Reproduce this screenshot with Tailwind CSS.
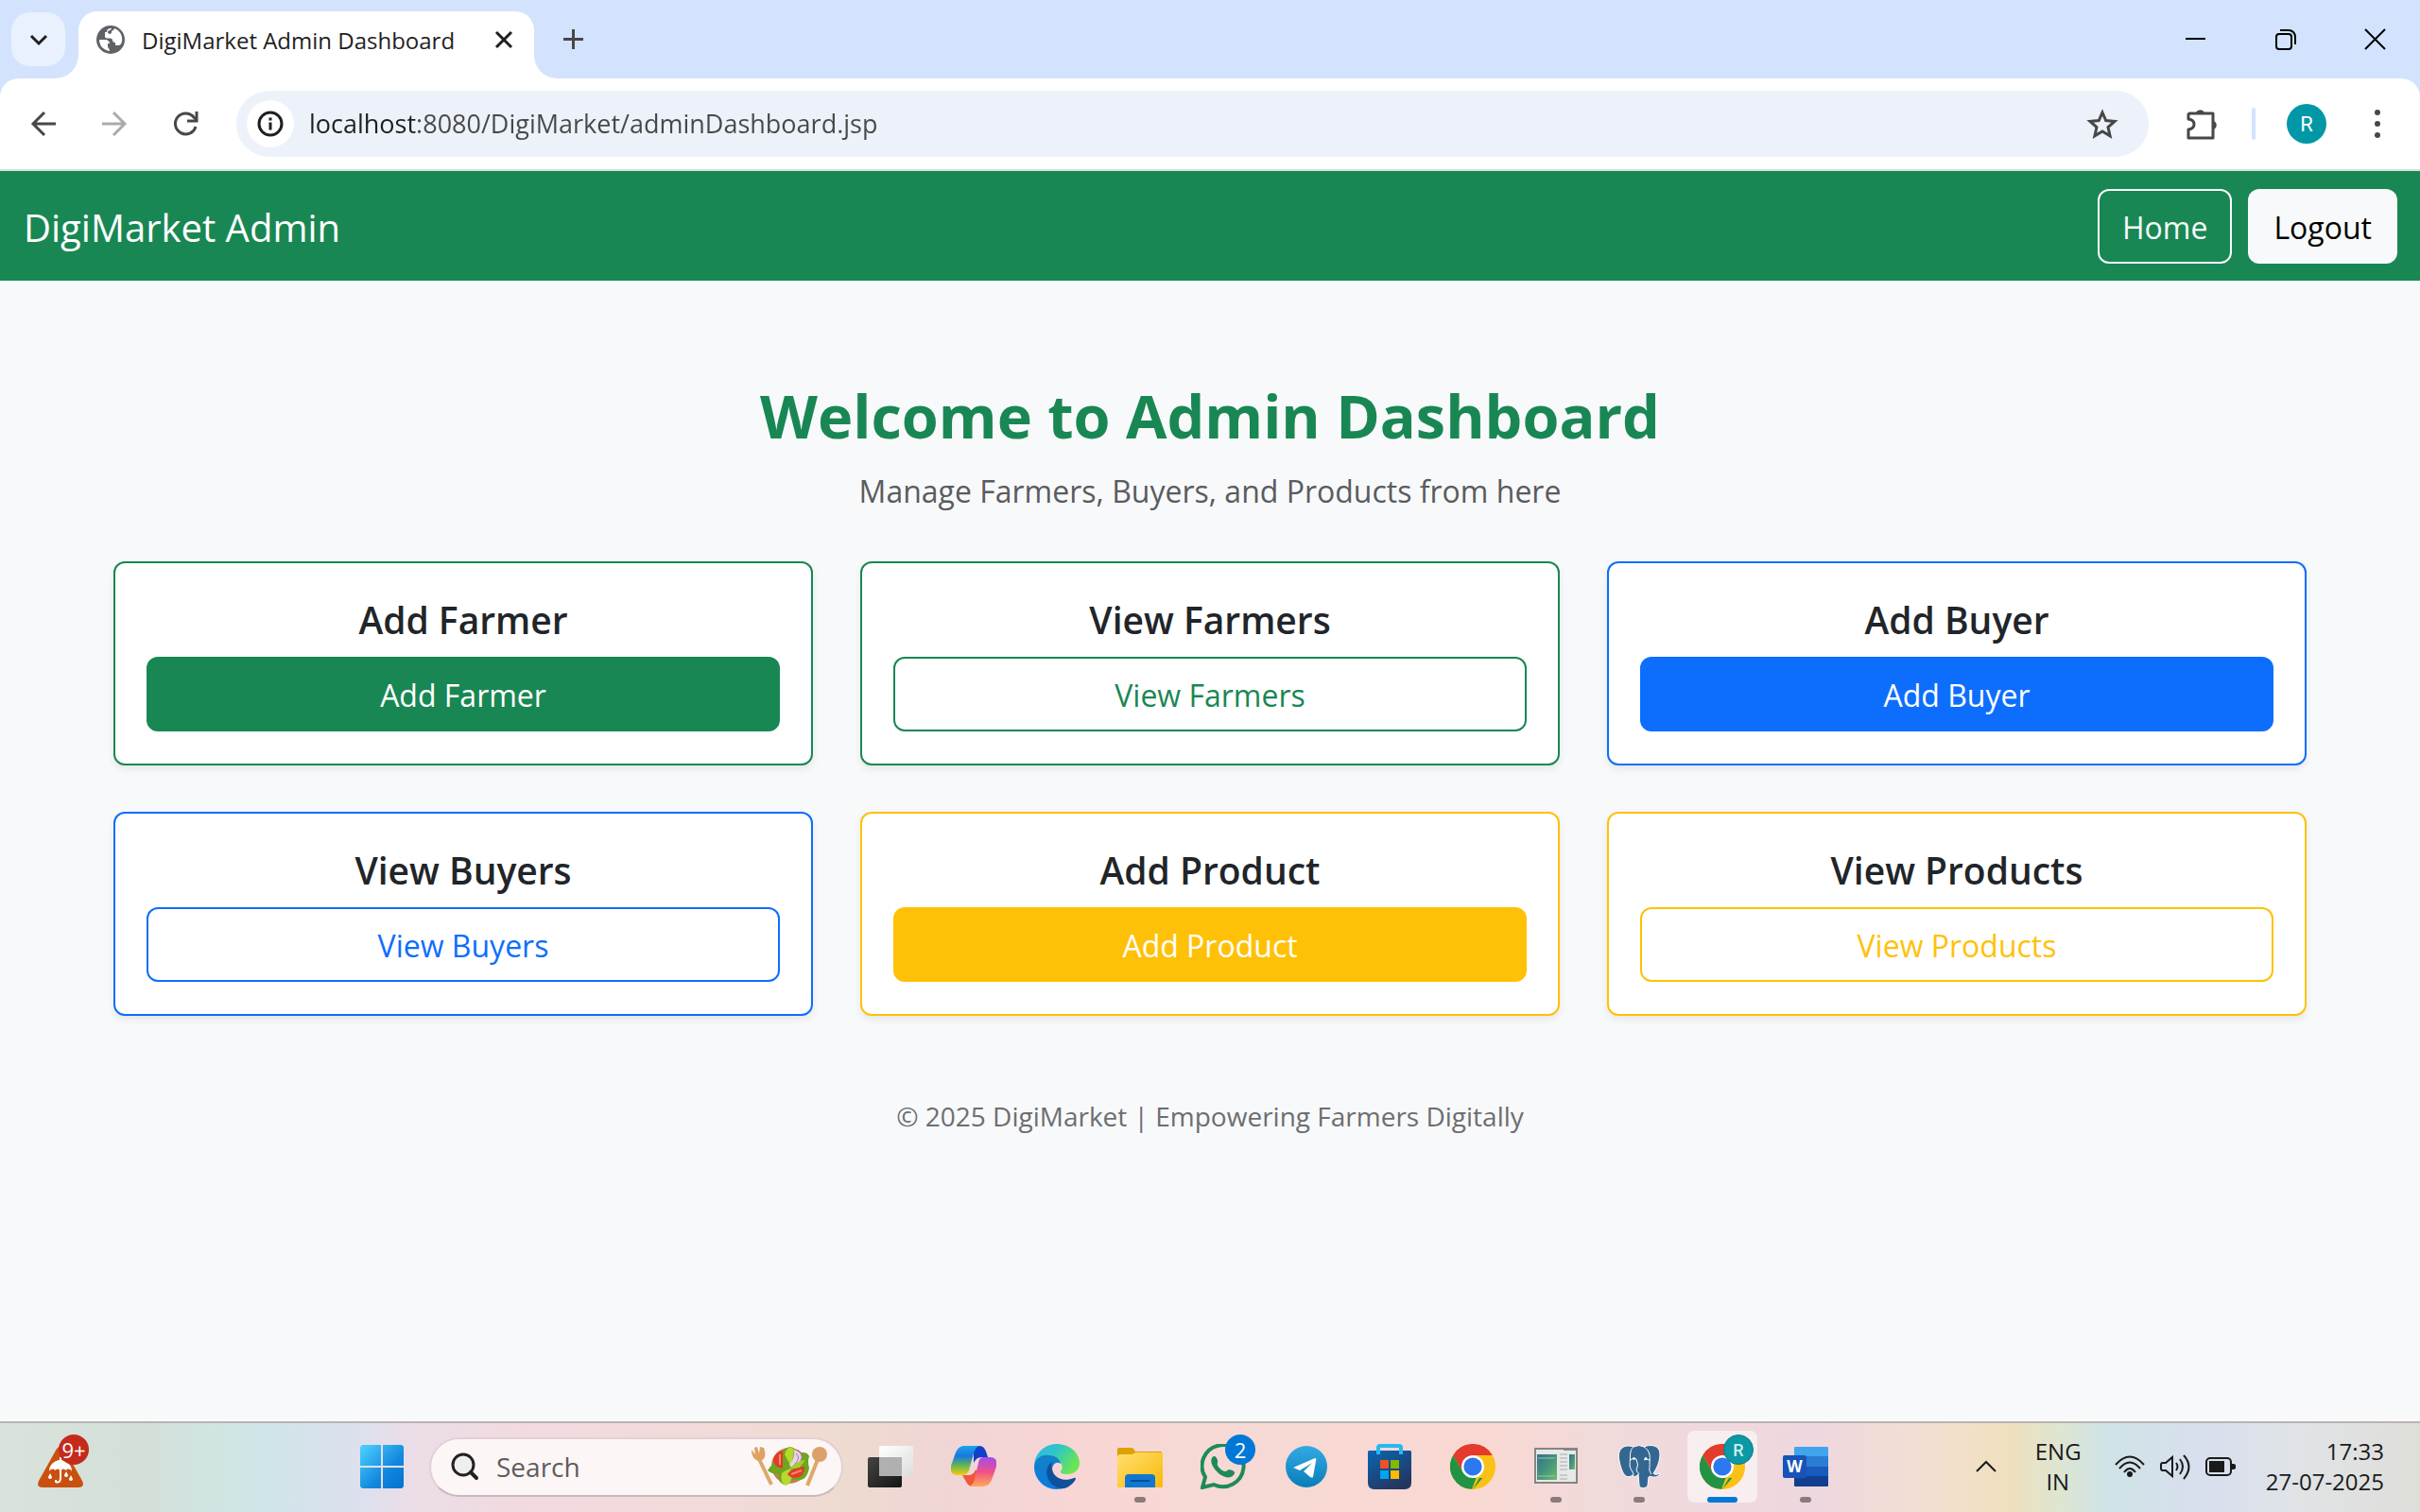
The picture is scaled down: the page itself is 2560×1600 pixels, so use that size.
<!DOCTYPE html>
<html lang="en">
<head>
<meta charset="utf-8">
<title>DigiMarket Admin Dashboard</title>
<script src="https://cdn.jsdelivr.net/npm/@tailwindcss/browser@4"></script>
</head>
<body class="flex min-h-screen flex-col bg-[#f8f9fa] font-['Open_Sans','Noto_Sans',sans-serif] text-[#212529]">

<!-- Browser window -->
<header class="bg-[#d3e3fd]">
  <div class="flex h-[83px] items-start pl-3 pt-3">
    <button aria-label="Search tabs" class="mt-px flex size-[57px] items-center justify-center rounded-[20px] bg-[#e9f1fe]">
      <svg class="size-5" viewBox="0 0 20 20" fill="none" stroke="#1f1f1f" stroke-width="3"><path d="M2 6l8 8 8-8"/></svg>
    </button>
    <div class="relative ml-[14px] flex h-[71px] w-[482px] items-center rounded-t-[20px] bg-white pb-[11px] pl-[19px] pr-[22px]">
      <svg class="absolute -left-[26px] bottom-0 size-[26px]" viewBox="0 0 26 26" fill="#fff"><path d="M26 0v26H0C16 26 26 15 26 0z"/></svg>
      <svg class="absolute -right-[26px] bottom-0 size-[26px]" viewBox="0 0 26 26" fill="#fff"><path d="M0 0v26h26C10 26 0 15 0 0z"/></svg>
      <svg class="size-[30px]" viewBox="0 0 30 30"><circle cx="15" cy="15" r="15" fill="#5f6368"/><path d="M3 15h6c3 0 5 2 5 4h-2v3c0 2 2 2 2 5C7 26 3 21 3 15zM16 3c-4 0-5 2-5 4h-2v5c0 3 7 0 8 3 0 3 2 3 3 3v3h3c2 0 3-1 4-4 1-6-2-12-8-14 0 2-3 2-3 4 0 3-4 2-4 0 0-2 4-2 4-4z" fill="#fff"/></svg>
      <span class="ml-[18px] flex-1 whitespace-nowrap pt-px text-[24px] text-[#1f1f1f]">DigiMarket Admin Dashboard</span>
      <button aria-label="Close tab"><svg class="size-[20px]" viewBox="0 0 20 20" stroke="#1f1f1f" stroke-width="3"><path d="M2 2l16 16M18 2L2 18"/></svg></button>
    </div>
    <button aria-label="New tab" class="ml-[30px] mt-[18px]"><svg class="size-[23px]" viewBox="0 0 23 23" stroke="#474747" stroke-width="3"><path d="M11.500 1v21M1 11.500h21"/></svg></button>
    <div class="mr-[36px] ml-auto mt-[18px] flex items-center gap-[72px]">
      <button aria-label="Minimize"><svg class="size-[23px]" viewBox="0 0 23 23" stroke="#000" stroke-width="2"><path d="M1 11h21"/></svg></button>
      <button aria-label="Restore"><svg class="size-[23px]" viewBox="0 0 23 23" fill="none" stroke="#000" stroke-width="2"><rect x="2" y="6" width="16" height="16" rx="3"/><path d="M6 2h9c4 0 7 3 7 7v8"/></svg></button>
      <button aria-label="Close"><svg class="size-[23px]" viewBox="0 0 23 23" stroke="#000" stroke-width="2"><path d="M1 1l21 21M22 1L1 22"/></svg></button>
    </div>
  </div>

  <div class="flex h-[98px] items-center rounded-t-[20px] border-b-2 border-[#dcdfdd] bg-white pl-[32px] pr-[34px]">
    <button aria-label="Back"><svg class="size-[28px]" viewBox="0 0 28 28" fill="none" stroke="#474747" stroke-width="3"><path d="M27 14H4M15 2L3 14l12 12"/></svg></button>
    <button aria-label="Forward" class="ml-[47px]"><svg class="size-[28px]" viewBox="0 0 28 28" fill="none" stroke="#ababab" stroke-width="3"><path d="M1 14h23M13 2l12 12-12 12"/></svg></button>
    <button aria-label="Reload" class="ml-[47px]"><svg class="size-[28px]" viewBox="0 0 28 28" fill="none" stroke="#474747" stroke-width="3"><path d="M25 17a11 11 0 1 1-2-10l3 3"/><path d="M26 1v10H16"/></svg></button>
    <form class="ml-[40px] flex h-[70px] flex-1 items-center rounded-full bg-[#ecf1fa] pl-[11px] pr-[32px]">
      <button type="button" aria-label="Site information" class="flex size-[50px] items-center justify-center rounded-full bg-white"><svg class="size-[28px]" viewBox="0 0 28 28" fill="none" stroke="#1f1f1f" stroke-width="3"><circle cx="14" cy="14" r="12"/><path d="M14 12.500v8M14 7.500v3"/></svg></button>
      <input aria-label="Address" value="localhost:8080/DigiMarket/adminDashboard.jsp" class="ml-4 min-w-0 flex-1 bg-[linear-gradient(90deg,#1f1f1f_115px,#474747_115px)] bg-clip-text pt-px text-[27px] text-transparent outline-none">
      <button type="button" aria-label="Bookmark"><svg class="size-[34px]" viewBox="0 0 34 34" fill="none" stroke="#474747" stroke-width="3"><path d="M17 5l3.700 8.600 9.300.800-7 6.200 2.100 9.200-8.100-4.900-8.100 4.900L11 20.600l-7-6.200 9.300-.800z"/></svg></button>
    </form>
    <button aria-label="Extensions" class="ml-[38px]"><svg class="size-[36px]" viewBox="0 0 36 36"><path d="M5 7h25v26H4v-9c8-1 8-10 0-11V8z" fill="none" stroke="#474747" stroke-width="3" stroke-linejoin="round"/><path d="M12 6a5 5 0 0 1 9 0zM31 15a5 5 0 0 1 0 9z" fill="#474747"/></svg></button>
    <div class="ml-[35px] h-[34px] w-1 rounded-full bg-[#d3e3fd]"></div>
    <button aria-label="Profile" class="ml-[33px] flex size-[42px] items-center justify-center rounded-full bg-[#0097a7] font-['Roboto'] text-[22px] text-white">R</button>
    <button aria-label="Menu" class="ml-[43px]"><svg class="h-[32px] w-[22px]" viewBox="0 0 22 32" fill="#474747"><circle cx="11" cy="4" r="3"/><circle cx="11" cy="16" r="3"/><circle cx="11" cy="28" r="3"/></svg></button>
  </div>
</header>

<!-- Page -->
<nav class="flex h-[116px] items-center bg-[#198754] pl-[25px] pr-6">
  <a href="#" class="pt-[3px] text-[40px] text-white">DigiMarket Admin</a>
  <a href="#" class="ml-auto flex h-[79px] items-center rounded-xl border-2 border-[#f8f9fa] px-6 pt-[3px] text-[32px] text-[#f8f9fa]">Home</a>
  <a href="#" class="ml-[17px] flex h-[79px] items-center rounded-xl bg-[#f8f9fa] px-[27px] pt-[3px] text-[32px] text-black">Logout</a>
</nav>

<main class="flex-1 px-[120px] pt-[103px] text-center">
  <h1 class="text-[63px] leading-[80px] font-bold text-[#198754]">Welcome to Admin Dashboard</h1>
  <p class="mt-[15px] text-[32px] leading-[50px] text-[#595c5f]">Manage Farmers, Buyers, and Products from here</p>

  <div class="mt-[49px] grid grid-cols-3 gap-x-[50px] gap-y-[49px]">
    <section class="rounded-xl border-2 border-[#198754] bg-white px-[33px] py-[34px] shadow-[0_4px_8px_rgba(0,0,0,0.075)]">
      <h2 class="text-[39px] leading-[52px] font-semibold">Add Farmer</h2>
      <a href="#" class="mt-[13px] flex h-[79px] items-center justify-center rounded-xl border-2 border-[#198754] pt-[3px] bg-[#198754] text-[32px] text-white">Add Farmer</a>
    </section>
    <section class="rounded-xl border-2 border-[#198754] bg-white px-[33px] py-[34px] shadow-[0_4px_8px_rgba(0,0,0,0.075)]">
      <h2 class="text-[39px] leading-[52px] font-semibold">View Farmers</h2>
      <a href="#" class="mt-[13px] flex h-[79px] items-center justify-center rounded-xl border-2 border-[#198754] pt-[3px] text-[32px] text-[#198754]">View Farmers</a>
    </section>
    <section class="rounded-xl border-2 border-[#0d6efd] bg-white px-[33px] py-[34px] shadow-[0_4px_8px_rgba(0,0,0,0.075)]">
      <h2 class="text-[39px] leading-[52px] font-semibold">Add Buyer</h2>
      <a href="#" class="mt-[13px] flex h-[79px] items-center justify-center rounded-xl border-2 border-[#0d6efd] pt-[3px] bg-[#0d6efd] text-[32px] text-white">Add Buyer</a>
    </section>
    <section class="rounded-xl border-2 border-[#0d6efd] bg-white px-[33px] py-[34px] shadow-[0_4px_8px_rgba(0,0,0,0.075)]">
      <h2 class="text-[39px] leading-[52px] font-semibold">View Buyers</h2>
      <a href="#" class="mt-[13px] flex h-[79px] items-center justify-center rounded-xl border-2 border-[#0d6efd] pt-[3px] text-[32px] text-[#0d6efd]">View Buyers</a>
    </section>
    <section class="rounded-xl border-2 border-[#ffc107] bg-white px-[33px] py-[34px] shadow-[0_4px_8px_rgba(0,0,0,0.075)]">
      <h2 class="text-[39px] leading-[52px] font-semibold">Add Product</h2>
      <a href="#" class="mt-[13px] flex h-[79px] items-center justify-center rounded-xl border-2 border-[#ffc107] pt-[3px] bg-[#ffc107] text-[32px] text-white">Add Product</a>
    </section>
    <section class="rounded-xl border-2 border-[#ffc107] bg-white px-[33px] py-[34px] shadow-[0_4px_8px_rgba(0,0,0,0.075)]">
      <h2 class="text-[39px] leading-[52px] font-semibold">View Products</h2>
      <a href="#" class="mt-[13px] flex h-[79px] items-center justify-center rounded-xl border-2 border-[#ffc107] pt-[3px] text-[32px] text-[#ffc107]">View Products</a>
    </section>
  </div>

  <p class="mt-[85px] text-[28px] leading-[42px] text-[#6c6e70]">© 2025 DigiMarket | Empowering Farmers Digitally</p>
</main>

<!-- Taskbar -->
<footer class="flex h-24 items-center border-t-2 border-[#b9b3b3] bg-[linear-gradient(90deg,#d9e3db_0%,#d4dfd9_6%,#d0e5e2_9%,#cfe5e9_11%,#dde0ee_15%,#ebdde7_17%,#f2dadf_22%,#f2dada_29%,#eedbd0_35%,#f0d5d5_39%,#f8d6d4_45%,#f6d9d5_50%,#f9d8d2_61%,#f1dada_66%,#eed8df_75%,#f3dfd0_80%,#efe0bd_83%,#dfe5d0_85%,#cfe3e6_87%,#d8dfee_91%,#e0e3e6_95%,#dfdfda_100%)] pb-[2px] text-[#1a1a1a]">
  <div class="w-[360px] pb-3 pl-[40px]">
    <button aria-label="Weather alerts" class="relative block h-[56px] w-[54px]">
      <svg class="size-full" viewBox="0 0 54 56"><path d="M20 15q4-5 8 0l19 34q3 7-4 7H5q-7 0-4-7z" fill="#ca5010"/><path d="M12 39c0-7 5-11 11-12v-3h2v3c6 1 11 5 11 12-2-3-5-3-6-1-2-2-4-2-5 0h-2c-1-2-3-2-5 0-1-2-4-2-6 1z" fill="#fff"/><path d="M24 36v11q-1 5-5 3v-2" fill="none" stroke="#fff" stroke-width="2"/><path d="M13 41l2 4a2 2 0 1 1-4 0zM30 39l2 4a2 2 0 1 1-4 0zM35 43l2 4a2 2 0 1 1-4 0z" fill="#fff"/></svg>
      <span class="absolute top-0 right-0 flex size-8 items-center justify-center rounded-full bg-[#c42b1c] text-[22px] text-white">9+</span>
    </button>
  </div>
  <button aria-label="Start" class="flex w-[88px] justify-center"><svg class="size-[46px]" viewBox="0 0 46 46"><defs><linearGradient id="win" x2="1" y2="1"><stop stop-color="#4fd4ff"/><stop offset=".6" stop-color="#1388de"/><stop offset="1" stop-color="#0072cf"/></linearGradient></defs><path d="M2 0h20v22H0V2zM24 0h20l2 2v20H24zM0 24h22v22H2l-2-2zM24 24h22v20l-2 2H24z" fill="url(#win)"/></svg></button>
  <label class="mx-[6px] flex h-[63px] w-[438px] items-center rounded-full border-2 border-[#e3d0d4] border-b-[#c8b9bb] bg-[#fcf6f6] pl-[20px] pr-[14px]">
    <svg class="size-[32px]" viewBox="0 0 32 32" fill="#eee" stroke="#222" stroke-linecap="round"><circle cx="14" cy="14" r="11" stroke-width="3"/><path d="M22 22l6 6" stroke-width="4"/></svg>
    <input type="search" aria-label="Search" placeholder="Search" class="ml-[17px] min-w-0 flex-1 text-[28px] outline-none placeholder:text-[#5f5c5c]">
    <svg class="h-[44px] w-[82px]" viewBox="0 0 82 44"><path d="M9 14l13 27M72 12L60 42" stroke="#dea868" stroke-width="4"/><path d="M1 4l4 5-1-7 3-1 2 7 1-7 4 1c3 8 1 13-4 14C5 16 1 12 1 4z" fill="#dfa263"/><ellipse cx="73" cy="9" rx="8" ry="8" fill="#dca06a"/><circle cx="41" cy="21" r="19" fill="#c97b4b"/><path d="M18 26q6-8 10-14 6-8 13-11 7 0 6 8 12-5 15 2-2 6 0 12-1 8-6 12-8 3-14 0l-7 6q-7-3-5-11-8 0-12-4z" fill="#6fa51f"/><path d="M36 9q4-12 10-5l-3 18zM33 29q10-8 11 0-1 13-7 13-6-2-4-13z" fill="#b5d930"/><path d="M34 5v19q-10-2-10-10 2-7 10-9zM39 30q6-8 18-8 0 11-9 12-6 0-9-4z" fill="#e23b28"/><path d="M31 9v11M43 30l11-4" stroke="#f58a68" stroke-width="2"/><path d="M46 4q14 5 4 18-7 2-9-2 6-7 5-16z" fill="#e7d4e7"/><path d="M48 8q6 5-2 12M50 4q9 8-1 16" stroke="#a873ae" fill="none"/><path d="M40 25q10-10 18-10l-6 8z" fill="#9fd02b"/></svg>
  </label>

  <button aria-label="Task view" class="flex w-[88px] justify-center"><svg class="size-[48px]" viewBox="0 0 48 48"><defs><linearGradient id="tv" x2="1" y2="1"><stop stop-color="#444"/><stop offset="1" stop-color="#151515"/></linearGradient><linearGradient id="tw" x2="1" y2="1"><stop stop-color="#fff"/><stop offset="1" stop-color="#ddd"/></linearGradient></defs><rect y="14" width="36" height="32" rx="2" fill="url(#tv)"/><rect x="12" y="2" width="36" height="32" rx="2" fill="url(#tw)"/><path d="M12 14h24v20H12z" fill="#b0b0b0"/></svg></button>

  <button aria-label="Copilot" class="flex w-[88px] justify-center"><svg class="size-[48px]" viewBox="0 0 48 48"><defs><linearGradient id="ca" x2="0" y2="1"><stop stop-color="#18a5e8"/><stop offset=".35" stop-color="#1878e0"/><stop offset=".65" stop-color="#5eb458"/><stop offset="1" stop-color="#f8cc08"/></linearGradient><linearGradient id="cb" x2="0" y2="1"><stop stop-color="#a04df0"/><stop offset=".5" stop-color="#ef5088"/><stop offset="1" stop-color="#ffab55"/></linearGradient></defs><path d="M24 2h6q5 0 7 6l2 6h-7q-5 0-8 6z" fill="#1240c8"/><path d="M12 33h6q6 0 8-6l6 10q-2 8-8 8-6 0-8-5z" fill="#f0583c"/><path d="M14 2h16q-4 1-6 8l-5 18q-2 5-7 5H7q-9 0-7-10l5-14q3-7 9-7z" fill="url(#ca)"/><path d="M34 14h7q9 0 7 10l-5 14q-3 7-9 7H19q5-2 6-8l4-17q1-6 5-6z" fill="url(#cb)"/></svg></button>

  <button aria-label="Edge" class="flex w-[88px] justify-center"><svg class="size-[48px]" viewBox="0 0 48 48"><defs><linearGradient id="ea" x2="1" y2=".5"><stop stop-color="#2cb5f3"/><stop offset=".5" stop-color="#2fc8c3"/><stop offset="1" stop-color="#6be650"/></linearGradient><linearGradient id="eb" x2="0" y2="1"><stop stop-color="#1482c4"/><stop offset="1" stop-color="#087be0"/></linearGradient></defs><path d="M0 24C0 10 11 0 24 0s24 9 24 20c0 8-6 12-13 12-5 0-8-1-7-3 3-3 2-8-2-11C16 10 4 11 0 24z" fill="url(#ea)"/><path d="M0 24c1-9 8-13 15-12 8 0 13 5 13 9-6-4-10 3-9 10 1 9 7 14 14 15-17 7-33-6-33-22z" fill="url(#eb)"/><path d="M19 19c-5 3-7 9-5 16 3 9 11 13 18 12 6-2 10-6 12-10q0-2-2-1c-9 4-19 1-22-6-2-5-2-8-1-11z" fill="#10509c"/></svg></button>

  <button aria-label="File Explorer" class="relative flex w-[88px] justify-center"><svg class="size-[48px]" viewBox="0 0 48 48"><defs><linearGradient id="fo" x2="1" y2="1"><stop stop-color="#ffdf70"/><stop offset="1" stop-color="#fab90a"/></linearGradient></defs><path d="M0 5l1-1h14q2 0 4 4h28v10H0z" fill="#dfa000"/><path d="M0 13l2-2h14l3-2h27l2 1v35l-1 1H0z" fill="url(#fo)"/><path d="M8 46V36q0-4 4-4h24q4 0 4 4v10z" fill="#1078d0"/><path d="M14 39h20" stroke="#0a4c91" stroke-width="2"/></svg><span class="absolute -bottom-[14px] h-[6px] w-3 rounded-full bg-[#8b7b7b]"></span></button>

  <button aria-label="WhatsApp" class="relative flex w-[88px] justify-center"><svg class="size-[48px]" viewBox="0 0 48 48"><path d="M2 46l3-11a22 22 0 1 1 9 8z" fill="none" stroke="#1d8b55" stroke-width="4"/><path d="M14 13c3-1 5 6 4 7-2 2 5 10 9 9 3-4 10 0 9 2-2 5-8 6-14 2-7-4-15-16-8-20z" fill="#1d8b55"/></svg><span class="absolute -top-[10px] right-[10px] flex size-8 items-center justify-center rounded-full bg-[#0078d7] text-[22px] text-white">2</span></button>

  <button aria-label="Telegram" class="flex w-[88px] justify-center"><svg class="size-[44px]" viewBox="0 0 44 44"><defs><linearGradient id="te" x2="0" y2="1"><stop stop-color="#34aae4"/><stop offset="1" stop-color="#087db8"/></linearGradient></defs><circle cx="22" cy="22" r="22" fill="url(#te)"/><path d="M8 23l23-10q2 0 1 3l-3 17q-1 1-3 0l-7-6 9-9-13 8z" fill="#fff"/></svg></button>

  <button aria-label="Microsoft Store" class="flex w-[88px] justify-center"><svg class="size-[48px]" viewBox="0 0 48 48"><defs><linearGradient id="st" x2=".6" y2="1"><stop stop-color="#0966b4"/><stop offset="1" stop-color="#243660"/></linearGradient></defs><path d="M1 8l1-1h44l1 1v33q0 7-7 7H8q-7 0-7-7z" fill="url(#st)"/><path d="M12 11V4q0-2 2-2h20q2 0 2 2v7" fill="none" stroke="#25b8f4" stroke-width="4"/><path d="M14 17h9v9h-9z" fill="#f25022"/><path d="M25 17h9v9h-9z" fill="#7fba00"/><path d="M14 28h9v9h-9z" fill="#00a4ef"/><path d="M25 28h9v9h-9z" fill="#ffb900"/></svg></button>

  <button aria-label="Chrome" class="flex w-[88px] justify-center"><svg class="size-[48px]" viewBox="0 0 48 48"><g id="chrome"><circle cx="24" cy="24" r="24" fill="#fbc116"/><path d="M3.200 12A24 24 0 0 1 44.800 12H24L13.600 30z" fill="#e33b2e"/><path d="M3.200 12l10.400 18L24 36h10.400L24 48A24 24 0 0 1 3.200 12z" fill="#229342"/><path d="M34.400 30L24 48h-1l5-13z" fill="#fbc116"/><circle cx="24" cy="24" r="12" fill="#fff"/><circle cx="24" cy="24" r="9.600" fill="#2c78ee"/></g></svg></button>

  <button aria-label="System settings" class="relative flex w-[88px] justify-center"><svg class="size-[48px]" viewBox="0 0 48 48"><defs><linearGradient id="ap" x2="1" y2="1"><stop stop-color="#38708c"/><stop offset=".5" stop-color="#45947c"/><stop offset="1" stop-color="#70bb68"/></linearGradient></defs><path d="M2 5h44v36H2z" fill="#e8e8e8" stroke="#858585" stroke-width="2"/><path d="M32 6h13" stroke="#888" stroke-width="2"/><path d="M4 11h21v27H4z" fill="url(#ap)"/><path d="M5 15h18M5 34h18" stroke="#94c3b8"/><path d="M28 11h8M28 15h8M28 19h8M28 23h8M28 27h8M28 33h8M28 37h8" stroke="#aaa"/><path d="M38 11h6v16h-6z" fill="url(#ap)"/></svg><span class="absolute -bottom-[14px] h-[6px] w-3 rounded-full bg-[#8b7b7b]"></span></button>

  <button aria-label="PostgreSQL" class="relative flex w-[88px] justify-center"><svg class="size-[48px]" viewBox="0 0 48 48" fill="#336791" stroke="#fff" stroke-linejoin="round"><path d="M29 3c7-3 17-2 17 8 0 8-4 16-7 20l1 1q3 1 6-1c-1 4-5 4-8 4-2-1-3-1-4 0l-1 9c-1 3-8 4-9 0l-1-12c-2 3-5 3-6 1C9 39 5 28 3 18 0 4 9 0 18 3q6-3 11 0z"/><path d="M18 3c-5 4-3 12-4 19 0 5 4 7 4 11M29 3c6 4 7 9 6 17 1 4-2 7 2 12M14 17q4-3 7-1 3 6 0 12l3 4M35 17q-4-2-6 0" fill="none"/><circle cx="18.500" cy="15.500" r="1" fill="#fff"/><circle cx="31" cy="15.500" r="1" fill="#fff"/></svg><span class="absolute -bottom-[14px] h-[6px] w-3 rounded-full bg-[#8b7b7b]"></span></button>

  <button aria-label="Chrome, active" class="relative mx-[6px] flex h-[78px] w-[76px] items-center justify-center rounded-lg border border-[#ead9dc] bg-[#f8eeef]"><svg class="size-[48px]" viewBox="0 0 48 48"><use href="#chrome"/></svg><span class="absolute top-[4px] right-[4px] flex size-8 items-center justify-center rounded-full border border-[#0b7f8c] bg-[#0c98a5] font-['Roboto'] text-[18px] font-medium text-[#cdeef0]">R</span><span class="absolute bottom-0 h-[6px] w-8 rounded-full bg-[#0078d7]"></span></button>

  <button aria-label="Word" class="relative flex w-[88px] justify-center"><svg class="size-[48px]" viewBox="0 0 48 48"><path d="M12 4q0-1 1-1h34q1 0 1 1v10H12z" fill="#41a5ee"/><path d="M12 13h36v11H12z" fill="#2b7cd3"/><path d="M12 24h36v10H12z" fill="#185abd"/><path d="M12 34h36v10q0 1-1 1H13q-1 0-1-1z" fill="#103f91"/><rect y="12" width="25" height="24" rx="2" fill="#1853b8"/><text x="12.500" y="30" text-anchor="middle" fill="#fff" class="font-['Open_Sans'] text-[17px] font-bold">W</text></svg><span class="absolute -bottom-[14px] h-[6px] w-3 rounded-full bg-[#8b7b7b]"></span></button>

  <div class="ml-auto flex items-center pr-[38px] text-[24px] leading-8">
    <button aria-label="Show hidden icons"><svg class="size-[24px]" viewBox="0 0 24 24" fill="none" stroke="#1a1a1a" stroke-width="2"><path d="M2 17L12 7l10 10"/></svg></button>
    <button class="ml-[40px] w-[48px] text-center">ENG<br>IN</button>
    <button aria-label="Network, volume and battery" class="ml-[36px] flex gap-4">
      <svg class="size-[32px]" viewBox="0 0 32 32" fill="none" stroke="#1a1a1a" stroke-width="2"><path d="M1 14q15-17 30 0M5 18q11-13 22 0M10 22q6-8 12 0"/><circle cx="16" cy="24" r="2" fill="#1a1a1a"/></svg>
      <svg class="size-[32px]" viewBox="0 0 32 32" fill="none" stroke="#1a1a1a" stroke-width="2"><path d="M13 6v20l-7-6H3q-2 0-2-2v-4q0-2 2-2h3zM17 12q3 4 0 8M21 8q6 8 0 16M25 4q11 12 0 25"/></svg>
      <svg class="size-[32px]" viewBox="0 0 32 32"><rect x="1" y="7" width="26" height="18" rx="4" fill="none" stroke="#1a1a1a" stroke-width="2"/><path d="M4 10h16v12H4zM28 13h2l2 1v4l-2 1h-2z" fill="#1a1a1a"/></svg>
    </button>
    <button class="ml-[32px] text-right">17:33<br>27-07-2025</button>
  </div>
</footer>
</body>
</html>
